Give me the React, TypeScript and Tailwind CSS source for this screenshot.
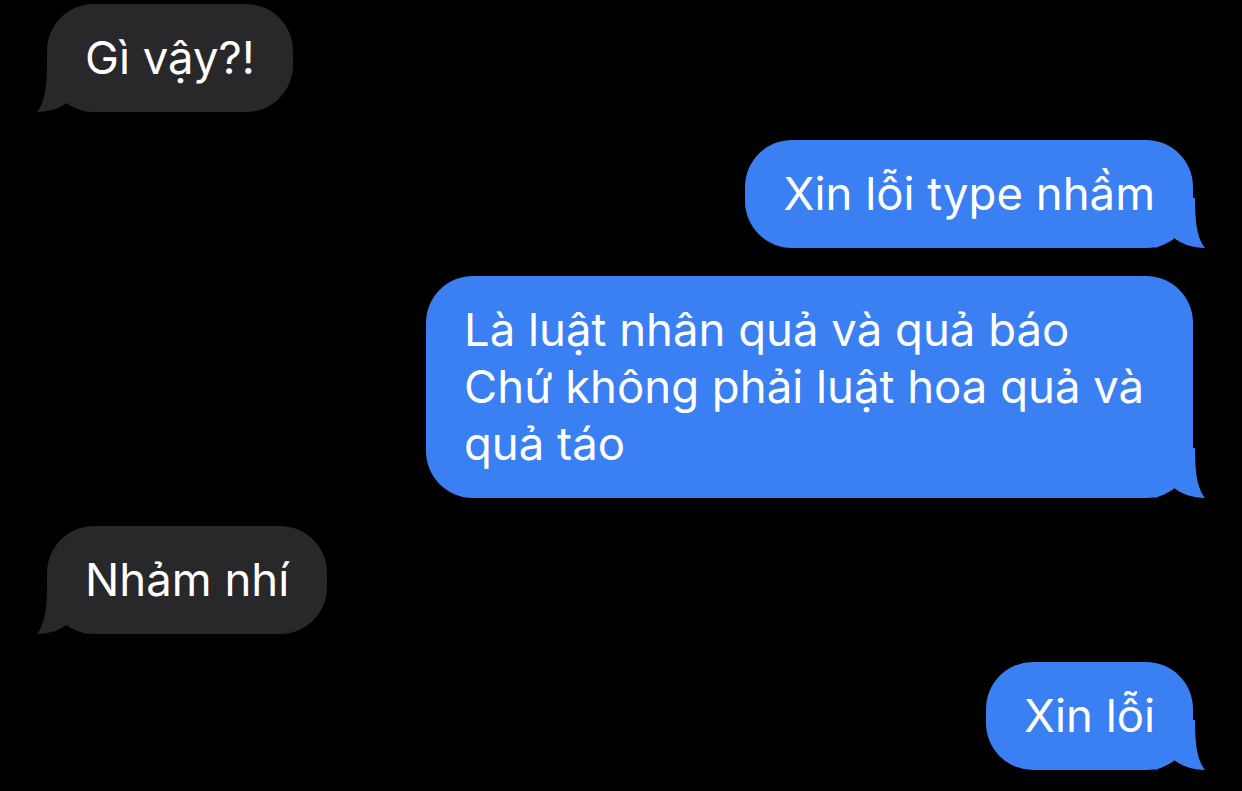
import React from "react";

function Tail({ side, color }: { side: "left" | "right"; color: string }) {
  const pos = side === "left" ? "left-[-10px] " : "right-[-12px] -scale-x-100 ";
  return (
    <svg
      className={"absolute bottom-0 " + pos}
      width="50"
      height="50"
      viewBox="0 0 50 50"
    >
      <path
        d="M 10 0 C 10 28, 7 41, 0 50 C 12 50, 24 46, 32 39 C 38 45, 44 48, 50 50 L 50 0 Z"
        fill={color}
      />
    </svg>
  );
}

function Bubble({
  side,
  children,
  className = "",
}: {
  side: "left" | "right";
  children: React.ReactNode;
  className?: string;
}) {
  const isLeft = side === "left";
  const color = isLeft ? "#28282a" : "#3b80f2";
  return (
    <div className={isLeft ? "flex justify-start pl-[47px]" : "flex justify-end pr-[49px]"}>
      <div className="relative">
        <Tail side={side} color={color} />
        <div
          className={
            "relative rounded-[47px] px-[38px] pt-[25px] pb-[26px] text-[45.5px] leading-[57px] text-white " +
            (isLeft ? "bg-[#28282a] " : "bg-[#3b80f2] ") +
            className
          }
        >
          {children}
        </div>
      </div>
    </div>
  );
}

export default function App() {
  return (
    <div
      className="w-[1242px] h-[791px] overflow-hidden bg-black flex flex-col gap-[28px] pt-[4px]"
      style={{ fontFamily: "Inter, 'Noto Sans', sans-serif" }}
    >
      <Bubble side="left">Gì vậy?!</Bubble>
      <Bubble side="right">Xin lỗi type nhầm</Bubble>
      <Bubble side="right" className="w-[767px]">
        Là luật nhân quả và quả báo
        <br />
        Chứ không phải luật hoa quả và
        <br />
        quả táo
      </Bubble>
      <Bubble side="left">Nhảm nhí</Bubble>
      <Bubble side="right">Xin lỗi</Bubble>
    </div>
  );
}
